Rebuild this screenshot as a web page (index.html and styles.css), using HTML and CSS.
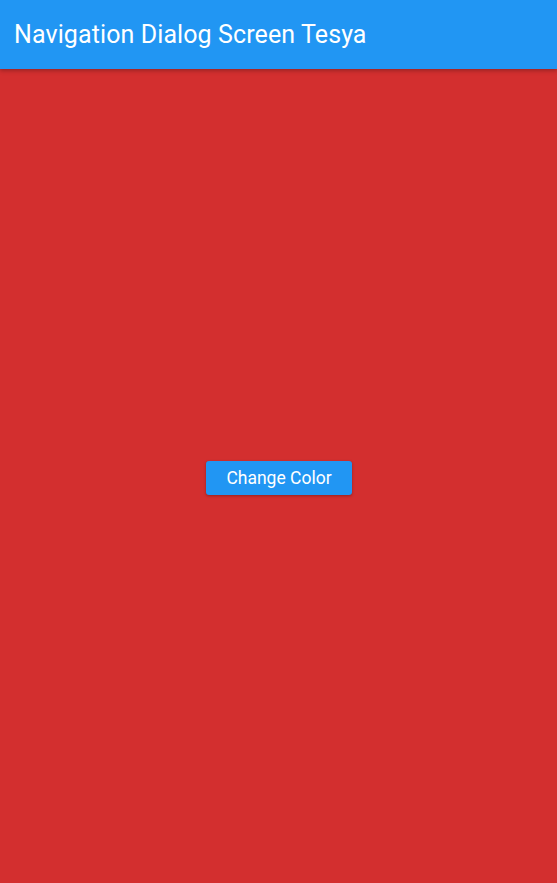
FILE: index.html
```html
<!DOCTYPE html>
<html>
<head>
<meta charset="utf-8">
<link rel="stylesheet" href="styles.css">
</head>
<body>
<div class="app">
  <header class="appbar"><h1 class="title">Navigation Dialog Screen Tesya</h1></header>
  <main class="content">
    <button class="btn">Change Color</button>
  </main>
</div>
</body>
</html>
```
FILE: styles.css
```css
html, body { margin: 0; padding: 0; height: 100%; }
body { font-family: Roboto, "Noto Sans", sans-serif; background: #D32F2F; }
.app { display: flex; flex-direction: column; height: 100vh; }
.appbar {
  height: 69px; flex: none; background: #2196F3;
  display: flex; align-items: center; padding: 0 14px;
  box-shadow: 0 2px 4px rgba(0,0,0,0.25);
  position: relative; z-index: 1;
}
.title { margin: 0; color: #fff; font-size: 25px; font-weight: 400; letter-spacing: 0.1px; }
.content { flex: 1; display: flex; align-items: center; justify-content: center; padding-top: 4px; }
.btn {
  width: 146px; height: 34px; border: none; border-radius: 3px;
  background: #2196F3; color: #fff; font-family: Roboto, sans-serif;
  font-size: 17.5px; font-weight: 400; cursor: pointer; margin-left: 1px;
  box-shadow: 0 1px 3px rgba(0,0,0,0.3);
}
```
